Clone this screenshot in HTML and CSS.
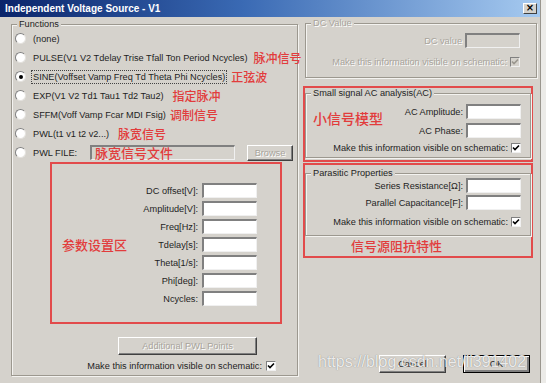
FILE: index.html
```html
<!DOCTYPE html>
<html lang="en">
    <head>
        <meta charset="UTF-8">
        <title>Independent Voltage Source - V1</title>
        <link rel="stylesheet" href="styles.css">
    </head>
    <body>
        <div class="window">
            <div class="titlebar">
                <span class="title">Independent Voltage Source - V1</span>
                <span class="close">×</span>
            </div>
            <div class="main">
                <!-- Left: function choice and parameters -->
                <div class="group functions">
                    <div class="legend">Functions</div>
                    <div class="opt"><span class="radio"></span><span>(none)</span></div>
                    <div class="opt"><span class="radio"></span><span>PULSE(V1 V2 Tdelay Trise Tfall Ton Period Ncycles)</span><span class="note n-pulse">脉冲信号</span></div>
                    <div class="opt"><span class="radio checked"></span><span class="focus">SINE(Voffset Vamp Freq Td Theta Phi Ncycles)</span><span class="note n-sine">正弦波</span></div>
                    <div class="opt"><span class="radio"></span><span>EXP(V1 V2 Td1 Tau1 Td2 Tau2)</span><span class="note n-exp">指定脉冲</span></div>
                    <div class="opt"><span class="radio"></span><span>SFFM(Voff Vamp Fcar MDI Fsig)</span><span class="note n-sffm">调制信号</span></div>
                    <div class="opt"><span class="radio"></span><span>PWL(t1 v1 t2 v2...)</span><span class="note n-pwl">脉宽信号</span></div>
                    <div class="opt">
                        <span class="radio"></span><span class="file-label">PWL FILE:</span>
                        <div class="file-field"><span class="note n-file">脉宽信号文件</span></div>
                        <span class="btn disabled browse">Browse</span>
                    </div>
                    <div class="params">
                        <div class="note n-params">参数设置区</div>
                        <div class="form">
                            <label>DC offset[V]:</label><span class="field"></span>
                            <label>Amplitude[V]:</label><span class="field"></span>
                            <label>Freq[Hz]:</label><span class="field"></span>
                            <label>Tdelay[s]:</label><span class="field"></span>
                            <label>Theta[1/s]:</label><span class="field"></span>
                            <label>Phi[deg]:</label><span class="field"></span>
                            <label>Ncycles:</label><span class="field"></span>
                        </div>
                    </div>
                    <div class="btn disabled pwl-points">Additional PWL Points</div>
                    <div class="visible-row left-visible">
                        <span>Make this information visible on schematic:</span>
                        <span class="check"><svg width="8" height="8" viewBox="0 0 8 8"><path d="M1 3.5 L3 5.5 L7 1.5" fill="none" stroke="#000" stroke-width="1.6"/></svg></span>
                    </div>
                </div>

                <!-- Right: DC, AC and parasitic groups -->
                <div class="side">
                    <div class="group dc">
                        <div class="legend off">DC Value</div>
                        <div class="row dc-row">
                            <label class="off">DC value</label><span class="field off-field"></span>
                        </div>
                        <div class="visible-row dc-visible">
                            <span class="off">Make this information visible on schematic:</span>
                            <span class="check off-check"><svg width="8" height="8" viewBox="0 0 8 8"><path d="M1 3.5 L3 5.5 L7 1.5" fill="none" stroke="#9a968e" stroke-width="1.6"/></svg></span>
                        </div>
                    </div>

                    <div class="mark ac-mark">
                        <div class="group inner">
                            <div class="legend">Small signal AC analysis(AC)</div>
                            <div class="ac-body">
                                <div class="note n-ac">小信号模型</div>
                                <div class="form side-form">
                                    <label>AC Amplitude:</label><span class="field"></span>
                                    <label>AC Phase:</label><span class="field"></span>
                                </div>
                            </div>
                            <div class="visible-row inner-visible">
                                <span>Make this information visible on schematic:</span>
                                <span class="check"><svg width="8" height="8" viewBox="0 0 8 8"><path d="M1 3.5 L3 5.5 L7 1.5" fill="none" stroke="#000" stroke-width="1.6"/></svg></span>
                            </div>
                        </div>
                    </div>

                    <div class="mark par-mark">
                        <div class="group inner par">
                            <div class="legend">Parasitic Properties</div>
                            <div class="form side-form par-form">
                                <label>Series Resistance[Ω]:</label><span class="field"></span>
                                <label>Parallel Capacitance[F]:</label><span class="field"></span>
                            </div>
                            <div class="visible-row inner-visible par-visible">
                                <span>Make this information visible on schematic:</span>
                                <span class="check"><svg width="8" height="8" viewBox="0 0 8 8"><path d="M1 3.5 L3 5.5 L7 1.5" fill="none" stroke="#000" stroke-width="1.6"/></svg></span>
                            </div>
                        </div>
                        <div class="note n-par">信号源阻抗特性</div>
                    </div>

                    <div class="buttons">
                        <span class="btn">Cancel</span>
                        <span class="btn default">OK</span>
                    </div>
                </div>
            </div>
            <div class="watermark">https://blog.csdn.net/li391402</div>
        </div>
    </body>
</html>
```

FILE: styles.css
```css
* {
    box-sizing: border-box;
}
body {
    margin: 0;
    background: #ecebe8;
    font-family: "Liberation Sans", Arial, sans-serif;
    font-size: 9.2px;
    color: #1e1e1e;
}
.window {
    position: relative;
    width: 541px;
    height: 383px;
    background: #d5d2cc;
    border-right: 1px solid #9a968e;
    overflow: hidden;
}
.titlebar {
    height: 17px;
    display: flex;
    align-items: center;
    justify-content: space-between;
    padding: 0 3px 0 5px;
    background: linear-gradient(to right, #0a246a, #3a6ab4 45%, #a6caf0);
}
.title {
    color: #fff;
    font-weight: bold;
    font-size: 10px;
}
.close {
    width: 14px;
    height: 11px;
    background: #d5d2cc;
    border: 1px solid;
    border-color: #fff #404040 #404040 #fff;
    font: bold 10px/8px "DejaVu Sans", sans-serif;
    text-align: center;
    color: #000;
}
.main {
    display: flex;
    gap: 5px;
    padding-left: 11px;
}

/* group boxes */
.group {
    border: 1px solid #9c988f;
    box-shadow: inset 1px 1px 0 #f4f3f0, 1px 1px 0 #f4f3f0;
}
.legend {
    width: fit-content;
    margin: -6px 0 0 5px;
    padding: 0 2px;
    line-height: 10px;
    background: #d5d2cc;
}
.off {
    color: #a8a49c;
    text-shadow: 1px 1px 0 #fff;
}
.functions {
    width: 287px;
    height: 352px;
    margin-top: 7px;
}
.opt {
    display: flex;
    align-items: center;
    height: 19px;
    padding-left: 3px;
    white-space: nowrap;
}
.radio {
    flex: none;
    width: 11px;
    height: 11px;
    margin-right: 7px;
    border-radius: 50%;
    background: #fff;
    border: 1px solid;
    border-color: #808080 #e4e2de #e4e2de #808080;
    display: flex;
    align-items: center;
    justify-content: center;
}
.radio.checked::after {
    content: "";
    width: 4px;
    height: 4px;
    border-radius: 50%;
    background: #000;
}
.focus {
    outline: 1px dotted #444;
    outline-offset: 1px;
}

/* red annotations */
.note {
    flex: none;
    color: #e23c3c;
    font-family: "Noto Sans CJK SC", sans-serif;
    font-weight: 500;
    font-size: 12px;
    line-height: 16px;
    white-space: nowrap;
}
.n-pulse { margin-left: 6px; }
.n-sine { margin-left: 6px; }
.n-exp { margin-left: 9px; }
.n-sffm { margin-left: 4px; }
.n-pwl { margin-left: 9px; }
.n-file {
    margin-left: 3px;
    font-size: 13px;
}
.mark {
    width: 230px;
    border: 2px solid #e24b4b;
}

.file-label {
    width: 57px;
}
.file-field {
    width: 145px;
    height: 15px;
    display: flex;
    align-items: center;
    background: #d5d2cc;
    border-style: solid;
    border-width: 2px 1px 1px 2px;
    border-color: #808080 #f0f0f0 #f0f0f0 #808080;
}
.btn {
    display: flex;
    align-items: center;
    justify-content: center;
    background: #d5d2cc;
    border: 1px solid;
    border-color: #fff #404040 #404040 #fff;
    box-shadow: inset -1px -1px 0 #808080;
}
.btn.disabled {
    color: #a8a49c;
    text-shadow: 1px 1px 0 #fff;
}
.browse {
    margin-left: 12px;
    width: 46px;
    height: 16px;
}

.params {
    margin-left: 38px;
    width: 232px;
    border: 2px solid #e24b4b;
    padding: 19px 23px 16px 10px;
    display: flex;
    align-items: center;
}
.n-params {
    width: 65px;
    font-size: 13px;
}
.form {
    flex: 1;
    display: grid;
    grid-template-columns: 1fr 55px;
    column-gap: 4px;
    row-gap: 3px;
    align-items: center;
}
.form label {
    text-align: right;
    white-space: nowrap;
}
.field {
    height: 15px;
    background: #fff;
    border-style: solid;
    border-width: 2px 1px 1px 2px;
    border-color: #808080 #f0f0f0 #f0f0f0 #808080;
}
.off-field {
    width: 55px;
    background: #d5d2cc;
}
.pwl-points {
    margin: 13px 0 0 106px;
    width: 139px;
    height: 18px;
}
.visible-row {
    display: flex;
    justify-content: flex-end;
    align-items: center;
    gap: 4px;
    height: 11px;
    white-space: nowrap;
}
.left-visible {
    margin-top: 5px;
    padding-right: 21px;
}
.check {
    width: 10px;
    height: 10px;
    display: flex;
    align-items: center;
    justify-content: center;
    background: #fff;
    border: 1px solid;
    border-color: #808080 #f0f0f0 #f0f0f0 #808080;
}
.off-check {
    background: #d5d2cc;
}

/* right column */
.side {
    width: 234px;
    display: flex;
    flex-direction: column;
    padding-top: 6px;
}
.dc {
    width: 232px;
    height: 55px;
    margin-left: 2px;
}
.row {
    display: flex;
    justify-content: flex-end;
    align-items: center;
    gap: 3px;
}
.dc-row {
    margin-top: 5px;
    padding-right: 16px;
}
.dc-visible {
    margin-top: 8px;
    gap: 3px;
    padding-right: 16px;
}
.ac-mark {
    margin-top: 8px;
    padding: 5px 0 2px 0;
}
.inner {
    padding-bottom: 4px;
}
.ac-body {
    display: flex;
    align-items: center;
    margin-top: 6px;
}
.n-ac {
    margin: 0 0 6px 7px;
    font-size: 14px;
}
.side-form {
    row-gap: 4px;
    column-gap: 3px;
    padding-right: 9px;
}
.inner-visible {
    margin-top: 4px;
    gap: 3px;
    padding-right: 9px;
}
.par-mark {
    margin-top: 1px;
    padding: 8px 0 2px 0;
}
.par {
    padding-bottom: 8px;
}
.par-form {
    row-gap: 2px;
}
.par-visible {
    margin-top: 6px;
}
.n-par {
    margin: 2px 0 0 46px;
    font-size: 13px;
}
.buttons {
    display: flex;
    justify-content: flex-end;
    gap: 17px;
    margin-top: 97px;
    padding-right: 7px;
}
.buttons .btn {
    width: 67px;
    height: 18px;
}
.buttons .default {
    border-color: #000;
    box-shadow: inset 1px 1px 0 #fff, inset -2px -2px 0 #808080;
}
.watermark {
    position: absolute;
    left: 318px;
    top: 352px;
    font-size: 16px;
    line-height: 20px;
    color: rgba(255, 255, 255, 0.85);
    text-shadow: 0 0 1px rgba(80, 80, 80, 0.7);
    white-space: nowrap;
}
```
